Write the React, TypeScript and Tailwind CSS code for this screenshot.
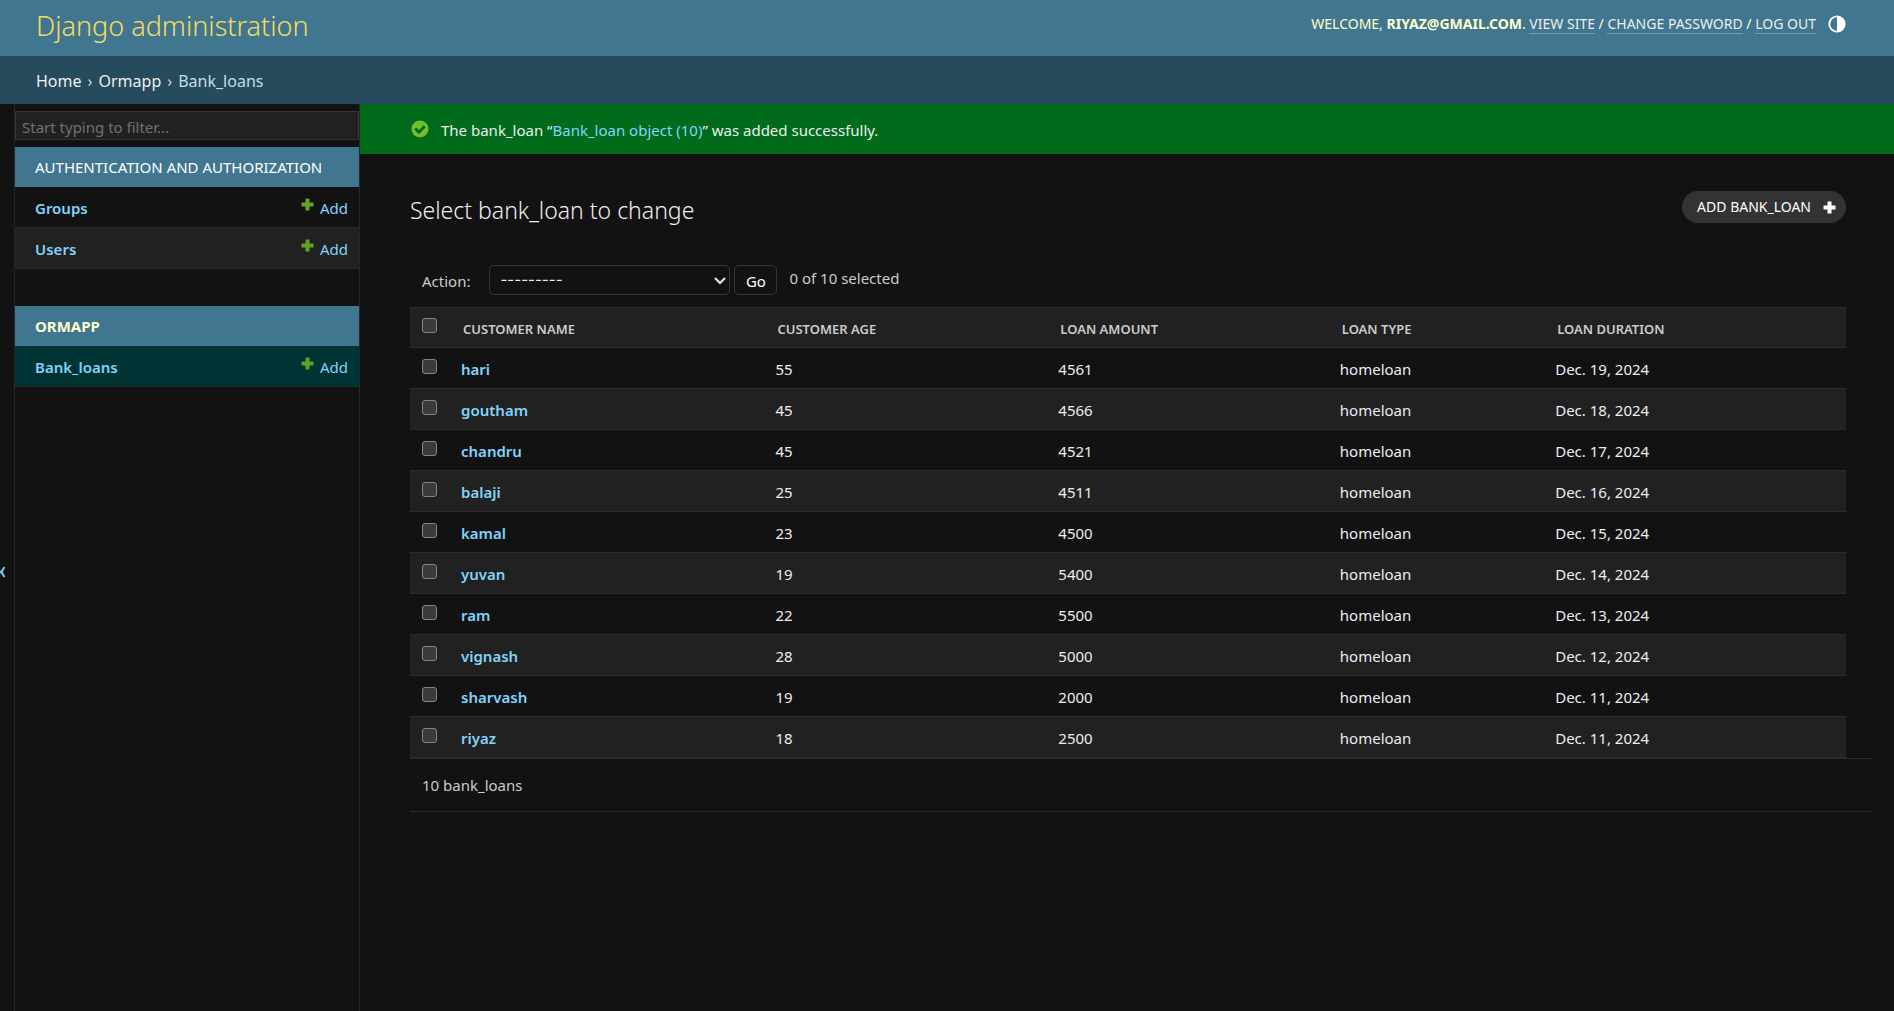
import { useState, type ReactNode } from "react";

type Loan = { name: string; age: number; amount: number; type: string; duration: string };

const loans: Loan[] = [
  { name: "hari", age: 55, amount: 4561, type: "homeloan", duration: "Dec. 19, 2024" },
  { name: "goutham", age: 45, amount: 4566, type: "homeloan", duration: "Dec. 18, 2024" },
  { name: "chandru", age: 45, amount: 4521, type: "homeloan", duration: "Dec. 17, 2024" },
  { name: "balaji", age: 25, amount: 4511, type: "homeloan", duration: "Dec. 16, 2024" },
  { name: "kamal", age: 23, amount: 4500, type: "homeloan", duration: "Dec. 15, 2024" },
  { name: "yuvan", age: 19, amount: 5400, type: "homeloan", duration: "Dec. 14, 2024" },
  { name: "ram", age: 22, amount: 5500, type: "homeloan", duration: "Dec. 13, 2024" },
  { name: "vignash", age: 28, amount: 5000, type: "homeloan", duration: "Dec. 12, 2024" },
  { name: "sharvash", age: 19, amount: 2000, type: "homeloan", duration: "Dec. 11, 2024" },
  { name: "riyaz", age: 18, amount: 2500, type: "homeloan", duration: "Dec. 11, 2024" },
];

const columns = ["Customer name", "Customer age", "Loan amount", "Loan type", "Loan duration"];

function PlusIcon({ className }: { className: string }) {
  return (
    <svg viewBox="0 0 13 13" className={className} aria-hidden="true">
      <path
        fill="currentColor"
        d="M5 .5h3q.5 0 .5.5v3.5H12q.5 0 .5.5v3q0 .5-.5.5H8.500V12q0 .5-.5.5H5q-.5 0-.5-.5V8.500H1q-.5 0-.5-.5V5q0-.5.5-.5h3.500V1q0-.5.5-.5z"
      />
    </svg>
  );
}

function ThemeIcon() {
  return (
    <svg viewBox="0 0 18 18" className="size-[18px]" aria-hidden="true">
      <circle cx="9" cy="9" r="7.700" fill="none" stroke="white" strokeWidth="1.800" />
      <path d="M9 1a8 8 0 0 1 0 16z" fill="white" />
    </svg>
  );
}

function SuccessIcon() {
  return (
    <svg viewBox="0 0 18 18" className="size-[18px] shrink-0" aria-hidden="true">
      <circle cx="9" cy="9" r="8.500" fill="#70bf2b" />
      <path d="M4.200 8.500l3.700 3.700 5.800-6" fill="none" stroke="#006b1b" strokeWidth="2.800" />
    </svg>
  );
}

function HeaderLink({ children }: { children: ReactNode }) {
  return (
    <a href="#" className="border-b border-white/25 text-[#eeeeee]">
      {children}
    </a>
  );
}

function ModelRow({ name, className }: { name: string; className: string }) {
  return (
    <tr className={className}>
      <th scope="row" className="h-[41px] border-b border-[#272727] pt-px pl-5 text-left font-semibold">
        <a href="#">{name}</a>
      </th>
      <td className="border-b border-[#272727] pt-px pr-[11px]">
        <a href="#" className="flex items-center justify-end gap-[6px]">
          <PlusIcon className="mb-[6px] size-[13px] text-[#5fa225]" />
          Add
        </a>
      </td>
    </tr>
  );
}

function AppModule({ title, active, children }: { title: string; active?: boolean; children: ReactNode }) {
  return (
    <table className="w-full border-separate border-spacing-0 text-[#81d4fa]">
      <caption className="h-10 bg-[#417690] px-5 text-left leading-10 uppercase">
        <a href="#" className={active ? "font-bold text-[#ffffcc]" : "text-white"}>
          {title}
        </a>
      </caption>
      <tbody>{children}</tbody>
    </table>
  );
}

function Checkbox({ label, checked, onChange }: { label: string; checked: boolean; onChange: () => void }) {
  return (
    <input
      type="checkbox"
      aria-label={label}
      checked={checked}
      onChange={onChange}
      className="mb-1 block size-[15px] appearance-none rounded-[3px] border border-[#858585] bg-[#3b3b3b] checked:bg-[#81d4fa]"
    />
  );
}

export default function App() {
  const [selected, setSelected] = useState<string[]>([]);
  const allSelected = selected.length === loans.length;
  const toggle = (name: string) =>
    setSelected((s) => (s.includes(name) ? s.filter((n) => n !== name) : [...s, name]));

  return (
    <div className="flex min-h-screen flex-col bg-[#121212] font-['Noto_Sans',sans-serif] text-[15px] leading-5 text-[#eeeeee]">
      <header className="flex h-14 items-center justify-between bg-[#417690] pr-12 pl-9 text-[#ffffcc]">
        <h1 className="pb-1 text-[27px] leading-9 font-light text-[#f5dd5d]">
          <a href="#">Django administration</a>
        </h1>
        <div className="flex items-center gap-3 pb-2 text-[14px] leading-4 uppercase">
          <div>
            Welcome, <strong className="font-bold">riyaz@gmail.com</strong>. <HeaderLink>View site</HeaderLink> /{" "}
            <HeaderLink>Change password</HeaderLink> / <HeaderLink>Log out</HeaderLink>
          </div>
          <button type="button" aria-label="Toggle theme">
            <ThemeIcon />
          </button>
        </div>
      </header>

      <nav aria-label="Breadcrumbs" className="flex h-12 items-center gap-[6px] bg-[#264b5d] px-9 pt-[2px] text-[16px] text-[#c4dce8]">
        <a href="#" className="text-[#eeeeee]">Home</a>›
        <a href="#" className="text-[#eeeeee]">Ormapp</a>›
        <span>Bank_loans</span>
      </nav>

      <div className="flex grow">
        <button
          type="button"
          aria-label="Toggle navigation"
          className="flex w-[15px] shrink-0 items-center overflow-hidden border-r border-[#272727] text-[#81d4fa]"
        >
          <svg viewBox="0 0 6 12" className="mt-7 h-3 w-[6px]" aria-hidden="true">
            <path d="M-2 1l2 5-2 5M4.500 1L1.500 6l3 5" fill="none" stroke="currentColor" strokeWidth="1.800" />
          </svg>
        </button>

        <aside className="w-[345px] shrink-0 border-r border-[#272727]">
          <input
            type="text"
            aria-label="Filter navigation items"
            placeholder="Start typing to filter..."
            className="my-[7px] block h-[29px] w-full border border-[#353535] bg-[#212121] px-[6px] pt-[2px] placeholder:text-[#717171]"
          />
          <div className="flex flex-col gap-[37px]">
            <AppModule title="Authentication and Authorization">
              <ModelRow name="Groups" className="bg-[#121212]" />
              <ModelRow name="Users" className="bg-[#212121]" />
            </AppModule>
            <AppModule title="Ormapp" active>
              <ModelRow name="Bank_loans" className="bg-[#003333]" />
            </AppModule>
          </div>
        </aside>

        <main className="min-w-0 grow">
          <div role="status" className="flex h-[50px] items-center gap-3 bg-[#006b1b] px-[51px]">
            <SuccessIcon />
            <p className="pt-px">
              The bank_loan “<a href="#" className="text-[#81d4fa]">Bank_loan object (10)</a>” was added successfully.
            </p>
          </div>

          <div className="pr-12 pl-[50px]">
            <div className="flex items-start justify-between pt-[37px]">
              <h2 className="pt-[3px] text-[23px] leading-8 font-light">Select bank_loan to change</h2>
              <a
                href="#"
                className="flex h-8 items-center gap-3 rounded-full bg-[#333333] pr-[10px] pl-[15px] text-[14px] text-white uppercase"
              >
                Add bank_loan
                <PlusIcon className="size-[13px]" />
              </a>
            </div>

            <div className="mt-[39px] flex h-[30px] items-center pl-3 text-[#cccccc]">
              <label htmlFor="action" className="mr-[19px] pt-[2px]">Action:</label>
              <div className="relative">
                <select
                  id="action"
                  className="block h-[30px] w-[241px] appearance-none rounded-[5px] border border-[#353535] bg-[#121212] pr-7 pl-[10px] font-['Inter',sans-serif] text-[#eeeeee]"
                >
                  <option>---------</option>
                  <option>Delete selected bank_loans</option>
                </select>
                <svg viewBox="0 0 12 8" className="pointer-events-none absolute top-3 right-1 h-2 w-3" aria-hidden="true">
                  <path d="M1 1l5 5 5-5" fill="none" stroke="#eeeeee" strokeWidth="2.200" />
                </svg>
              </div>
              <button
                type="button"
                className="mr-3 ml-1 h-[30px] w-[43px] rounded-[5px] border border-[#353535] pt-[2px] leading-4 text-white"
              >
                Go
              </button>
              <span className="pb-1">{selected.length} of 10 selected</span>
            </div>

            <table className="mt-3 w-full table-fixed border-collapse">
              <colgroup>
                <col className="w-[42px]" />
                <col className="w-[21.9%]" />
                <col className="w-[19.7%]" />
                <col className="w-[19.6%]" />
                <col className="w-[15%]" />
                <col />
              </colgroup>
              <thead>
                <tr className="border-y border-[#2b2b2b] bg-[#212121] text-[13px] text-[#cccccc] uppercase">
                  <th scope="col" className="h-10 pl-3">
                    <Checkbox
                      label="Select all"
                      checked={allSelected}
                      onChange={() => setSelected(allSelected ? [] : loans.map((l) => l.name))}
                    />
                  </th>
                  {columns.map((c) => (
                    <th key={c} scope="col" className="pt-[2px] pl-[11px] text-left font-semibold">
                      {c}
                    </th>
                  ))}
                </tr>
              </thead>
              <tbody>
                {loans.map((l) => (
                  <tr key={l.name} className="border-b border-[#2b2b2b] even:bg-[#212121]">
                    <td className="h-[41px] pl-3">
                      <Checkbox label={`Select ${l.name}`} checked={selected.includes(l.name)} onChange={() => toggle(l.name)} />
                    </td>
                    <th scope="row" className="px-[9px] pt-px text-left font-semibold">
                      <a href="#" className="text-[#81d4fa]">{l.name}</a>
                    </th>
                    <td className="px-[9px] pt-px">{l.age}</td>
                    <td className="px-[9px] pt-px">{l.amount}</td>
                    <td className="px-[9px] pt-px">{l.type}</td>
                    <td className="px-[9px] pt-px">{l.duration}</td>
                  </tr>
                ))}
              </tbody>
            </table>
          </div>

          <p className="mr-[23px] ml-[50px] border-y border-[#2b2b2b] px-3 py-4 text-[#cccccc]">10 bank_loans</p>
        </main>
      </div>
    </div>
  );
}
